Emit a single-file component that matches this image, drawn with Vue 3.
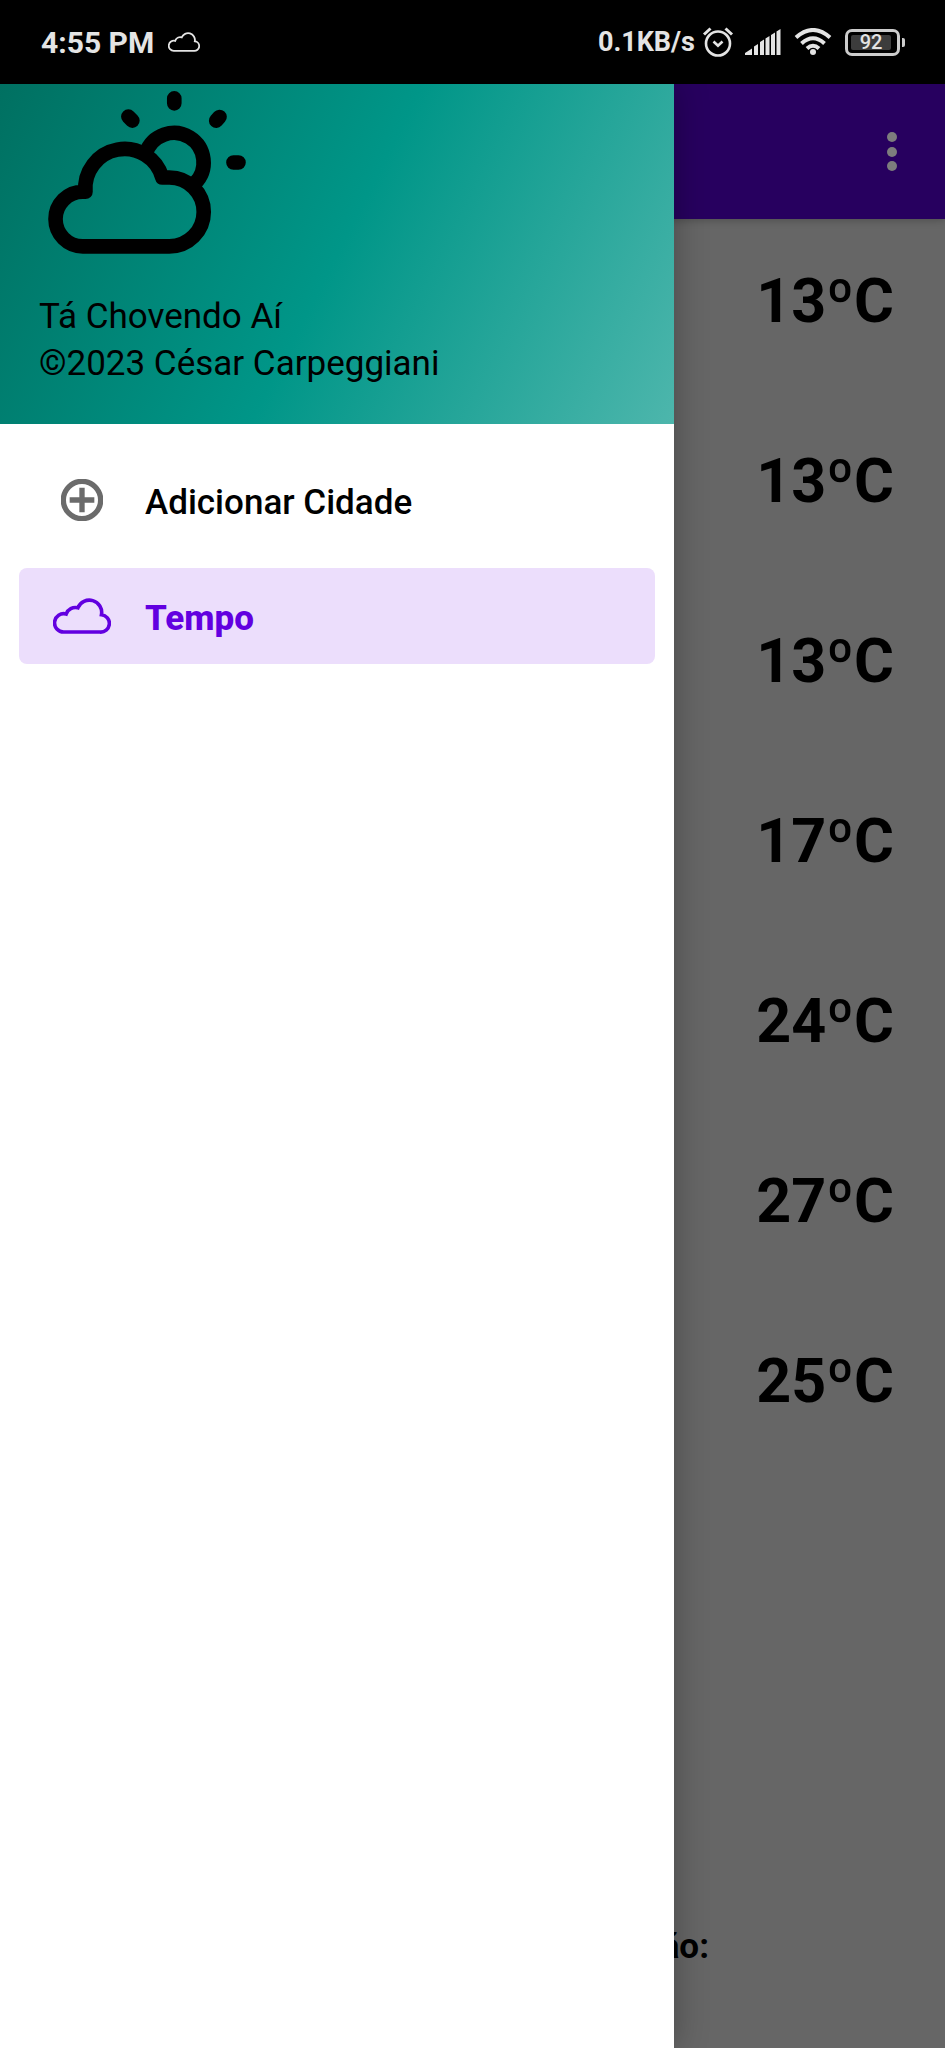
<script setup>
const temperatures = ['13ºC', '13ºC', '13ºC', '17ºC', '24ºC', '27ºC', '25ºC']
const cloud = 'M191 577A28 28 0 1 1 198 522A30 30 0 0 1 234 503A37.7 37.7 0 0 1 306 524A26.600 26.600 0 0 1 301 577Z'
</script>

<template>
  <div class="phone">
    <header class="status">
      <span class="time">4:55 PM</span>
      <svg class="status-cloud" viewBox="159 473 175 110" aria-hidden="true"><path :d="cloud" /></svg>
      <span class="rate">0.1KB/s</span>
      <svg class="alarm" viewBox="0 0 32 32" fill="none" aria-hidden="true">
        <circle cx="16" cy="17.500" r="12" stroke-width="2.600" />
        <path d="M11.500 15.500l4.500 4.300 4.500-4.300" stroke-width="2.600" />
        <path d="M2 8.500L8.500 2.500M30 8.500L23.500 2.500" stroke-width="3" />
      </svg>
      <svg class="signal" viewBox="0 0 36 26" aria-hidden="true">
        <path d="M0 26V24L7 19.500V26ZM9 26V17.500L13 15V26ZM15 26V13L19 10.500V26ZM20.500 26V9.500L24.500 7V26ZM26 26V6L30 3.500V26ZM31.500 26V2.500L35.500 0V26Z" />
      </svg>
      <svg class="wifi" viewBox="0 0 38 28" fill="none" aria-hidden="true">
        <path d="M2 9.500Q19 -5.500 36 9.500M7.500 15.500Q19 5 30.500 15.500M13 20.500Q19 15 25 20.500" stroke-width="4" />
        <circle cx="19" cy="24" r="3" />
      </svg>
      <span class="battery"><span class="charge">92</span></span>
    </header>

    <div class="screen">
      <main class="page">
        <div class="toolbar">
          <button class="more" type="button" aria-label="Mais opções">
            <svg viewBox="0 0 10 40" aria-hidden="true">
              <circle cx="5" cy="5" r="5" /><circle cx="5" cy="20" r="5" /><circle cx="5" cy="34" r="5" />
            </svg>
          </button>
        </div>
        <ul class="list">
          <li v-for="(t, i) in temperatures" :key="i">{{ t }}</li>
        </ul>
        <p class="update">ão:</p>
      </main>

      <aside class="drawer">
        <div class="banner">
          <svg class="logo" viewBox="144 32 594 490" fill="none" aria-hidden="true">
            <path d="M248 499A82 82 0 0 1 248 335H256A118 118 0 0 1 487 292H508A103.500 103.500 0 0 1 508 499Z" />
            <path d="M438 218A89 89 0 1 1 585 310" />
            <path class="rays" d="M523 54V69M701 247H716M385 109L397 121M649 121L659 110" />
          </svg>
          <p>Tá Chovendo Aí</p>
          <p>©2023 César Carpeggiani</p>
        </div>
        <nav class="menu">
          <a class="item" href="#adicionar">
            <svg class="plus" viewBox="184 119 126 126" aria-hidden="true">
              <circle cx="247" cy="182" r="56" />
              <path d="M210 182H284M247 145V219" />
            </svg>
            <span>Adicionar Cidade</span>
          </a>
          <a class="item active" href="#tempo">
            <svg class="menu-cloud" viewBox="159 473 175 110" aria-hidden="true"><path :d="cloud" /></svg>
            <span>Tempo</span>
          </a>
        </nav>
      </aside>
    </div>
  </div>
</template>

<style>
body {
  margin: 0;
}
</style>

<style scoped>
.phone {
  display: flex;
  flex-direction: column;
  min-height: 100vh;
  font-family: Roboto, "Liberation Sans", sans-serif;
  color: #000;
}
svg {
  display: block;
  flex: none;
}
p {
  margin: 0;
}
.status {
  display: flex;
  align-items: center;
  box-sizing: border-box;
  height: 84px;
  padding: 0 40px 0 41px;
  background: #000;
  color: #e4e4e4;
  font-size: 30px;
  font-weight: 700;
}
.status svg {
  stroke: #e4e4e4;
}
.status-cloud {
  width: 32px;
  height: 20px;
  margin-left: 14px;
  fill: none;
  stroke-width: 10;
}
.rate {
  margin-left: auto;
  font-size: 27px;
}
.alarm {
  width: 32px;
  height: 32px;
  margin-left: 7px;
}
.status .signal {
  width: 36px;
  height: 26px;
  margin-left: 11px;
  fill: #e4e4e4;
  stroke: none;
}
.wifi {
  width: 38px;
  height: 28px;
  margin-left: 13px;
}
.wifi circle {
  fill: #e4e4e4;
  stroke: none;
}
.battery {
  position: relative;
  box-sizing: border-box;
  width: 55px;
  height: 27px;
  margin-left: 13px;
  margin-right: 5px;
  padding: 3px;
  border: 3px solid #ccc;
  border-radius: 7px;
}
.battery::after {
  content: "";
  position: absolute;
  top: 6px;
  right: -8px;
  width: 3px;
  height: 9px;
  border-radius: 0 2px 2px 0;
  background: #ccc;
}
.charge {
  display: block;
  width: 40px;
  border-radius: 2px;
  background: #3c3c3c;
  font-size: 20px;
  font-weight: 500;
  line-height: 15px;
  text-align: center;
}
.screen {
  position: relative;
  display: flex;
  flex: 1;
  overflow: hidden;
}
.page {
  display: flex;
  flex: 1;
  flex-direction: column;
  background: #666;
}
.toolbar {
  display: flex;
  align-items: center;
  justify-content: flex-end;
  height: 135px;
  padding-right: 38px;
  background: #27005f;
  box-shadow: 0 1px 8px rgba(0, 0, 0, 0.25);
}
.more {
  padding: 0 10px;
  border: 0;
  background: none;
}
.more svg {
  width: 10px;
  height: 40px;
  fill: #7d7d7d;
}
.list {
  flex: 1;
  margin: 0;
  padding: 0 51px 0 0;
  list-style: none;
  font-size: 61px;
  font-weight: 700;
  text-align: right;
}
.list li {
  height: 180px;
  line-height: 164px;
}
.update {
  padding: 0 236px 80px 0;
  font-size: 35px;
  font-weight: 700;
  line-height: 42px;
  text-align: right;
}
.drawer {
  position: absolute;
  inset: 0 271px 0 0;
  background: #fff;
  box-shadow: 0 0 32px rgba(0, 0, 0, 0.3);
}
.banner {
  box-sizing: border-box;
  height: 340px;
  padding: 7px 39px;
  background: linear-gradient(117deg, #007061, #009688, #4db6ac);
  font-size: 35px;
  line-height: 47px;
}
.logo {
  width: 198px;
  height: 163px;
  margin: 0 0 39px 9px;
  stroke: #000;
  stroke-width: 44;
  stroke-linejoin: round;
}
.rays {
  stroke-linecap: round;
}
.menu {
  display: flex;
  flex-direction: column;
  gap: 20px;
  padding: 28px 19px;
}
.item {
  display: flex;
  align-items: center;
  height: 96px;
  padding-left: 34px;
  border-radius: 8px;
  color: #000;
  font-size: 35px;
  font-weight: 500;
  text-decoration: none;
}
.item span {
  padding-top: 4px;
}
.active {
  background: #ecdefc;
  color: #6200e0;
  font-weight: 800;
}
.plus {
  width: 42px;
  height: 42px;
  margin: 0 42px 0 8px;
  fill: none;
  stroke: #6b6b6b;
  stroke-width: 16;
}
.menu-cloud {
  width: 58px;
  height: 36px;
  margin-right: 34px;
  fill: none;
  stroke: #6200e0;
  stroke-width: 11;
}
</style>
